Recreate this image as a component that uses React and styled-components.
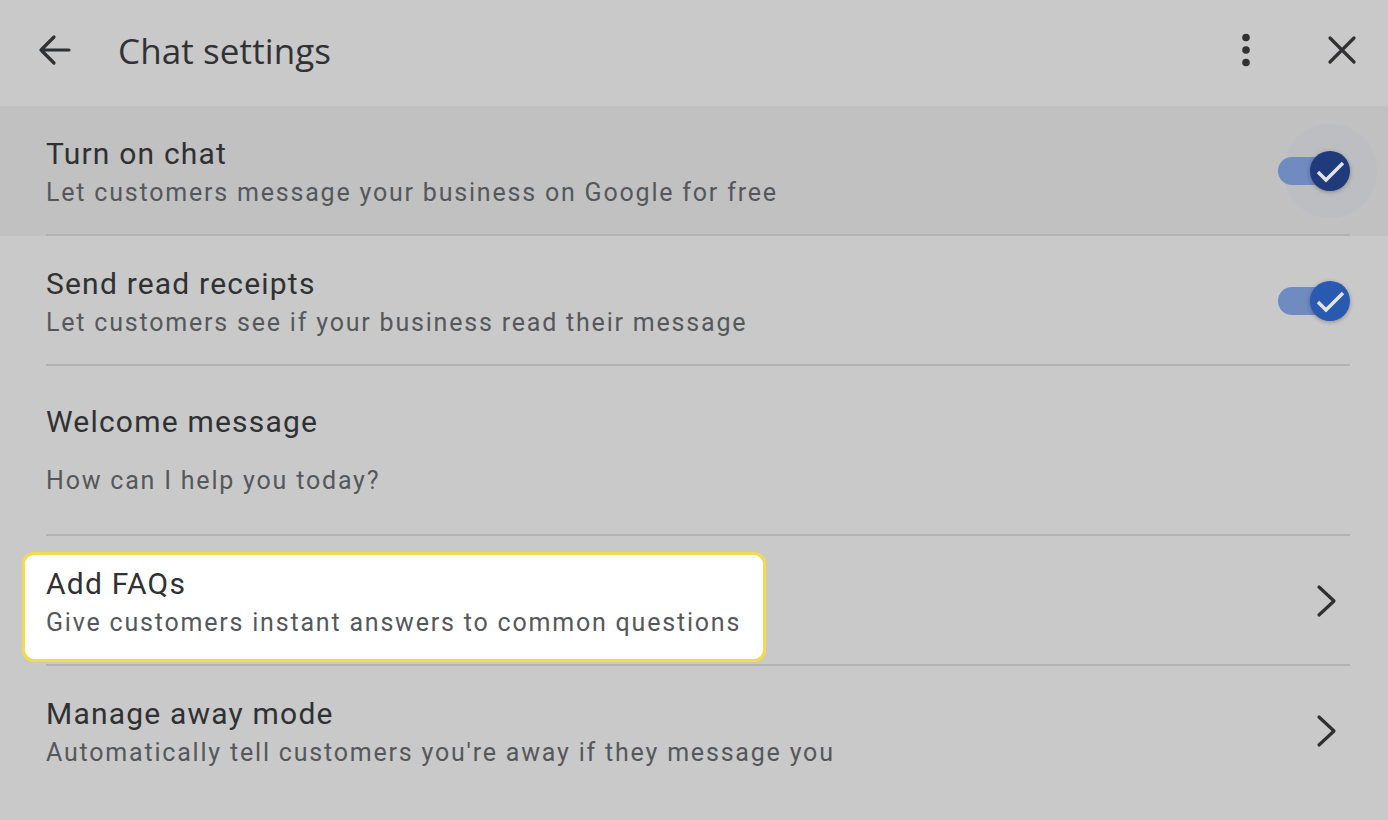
import React from 'react';
import styled, { createGlobalStyle } from 'styled-components';

// ==============================================

const GlobalStyle = createGlobalStyle`
  html, body {
    margin: 0;
    padding: 0;
    background: #c9c9c9;
  }
  body {
    font-family: Roboto, "Liberation Sans", sans-serif;
  }
`;

const Page = styled.div`
  width: 1388px;
  height: 820px;
  background: #c9c9c9;
  overflow: hidden;
`;

const Header = styled.div`
  display: flex;
  align-items: center;
  height: 106px;
  padding: 0 26px 6px 34px;
  box-sizing: border-box;
  color: #2f3133;
`;

const Title = styled.h1`
  margin: 0 0 0 44px;
  flex: 1;
  font-family: "Open Sans", sans-serif;
  font-weight: 400;
  font-size: 35px;
  color: #303235;
  letter-spacing: 0.1px;
`;

const IconButton = styled.div`
  display: grid;
  place-items: center;
  width: ${(p) => p.$size || 40}px;
  height: 40px;
  margin-left: ${(p) => p.$gap || 0}px;
`;

const List = styled.div`
  display: flex;
  flex-direction: column;
`;

const Row = styled.div`
  position: relative;
  display: flex;
  align-items: center;
  height: ${(p) => p.$height || 130}px;
  padding: 0 38px 0 46px;
  box-sizing: border-box;
  background: ${(p) => (p.$active ? '#c1c1c1' : 'transparent')};

  &::after {
    content: '';
    display: ${(p) => (p.$last ? 'none' : 'block')};
    position: absolute;
    left: 46px;
    right: 38px;
    bottom: 0;
    height: 2px;
    background: #b3b3b6;
  }
`;

const Texts = styled.div`
  flex: 1;
  display: flex;
  flex-direction: column;
  gap: ${(p) => p.$gap || 8}px;
  padding-top: ${(p) => p.$pt ?? 4}px;
  position: relative;
  z-index: 1;
`;

const RowTitle = styled.div`
  font-size: 30px;
  line-height: 32px;
  color: #2f3133;
  letter-spacing: 1.2px;
`;

const RowSub = styled.div`
  font-size: 25px;
  line-height: 30px;
  color: #55585b;
  letter-spacing: 1.8px;
`;

const Highlight = styled.div`
  position: absolute;
  left: 22px;
  top: 16px;
  width: 744px;
  height: 110px;
  box-sizing: border-box;
  background: #ffffff;
  border: 3px solid #f6da4e;
  border-radius: 12px;
  z-index: 0;
`;

const SwitchWrap = styled.div`
  position: relative;
  width: 72px;
  height: 40px;
  z-index: 1;
`;

const Halo = styled.div`
  position: absolute;
  left: 5px;
  top: -27px;
  width: 94px;
  height: 94px;
  border-radius: 50%;
  background: #bdbec1;
`;

const Track = styled.div`
  position: absolute;
  left: 0;
  top: 6px;
  width: 50px;
  height: 28px;
  border-radius: 14px;
  background: #6f8bbf;
`;

const Thumb = styled.div`
  position: absolute;
  left: 32px;
  top: 0;
  width: 40px;
  height: 40px;
  border-radius: 50%;
  background: ${(p) => (p.$pressed ? '#1f3b7c' : '#2a5ab0')};
  box-shadow: 0 1px 4px rgba(0, 0, 0, 0.3);

  svg {
    position: absolute;
    left: 0;
    top: 0;
  }
`;

const Chevron = styled.div`
  display: grid;
  place-items: center;
  width: 40px;
  height: 40px;
  margin-right: 4px;
  color: #2d2f31;
`;

// ==============================================

const Check = () => (
  <svg width='40' height='40' viewBox='0 0 40 40'>
    <path d='M8 21l8 8L33 12' fill='none' stroke='#e3e3e6' strokeWidth='3.4' />
  </svg>
);

const Switch = ({ pressed }) => (
  <SwitchWrap>
    {pressed && <Halo />}
    <Track />
    <Thumb $pressed={pressed}>
      <Check />
    </Thumb>
  </SwitchWrap>
);

const ChevronRight = () => (
  <Chevron>
    <svg width='22' height='34' viewBox='0 0 22 34'>
      <path d='M4 3l15 14L4 31' fill='none' stroke='currentColor' strokeWidth='3.2' strokeLinecap='round' strokeLinejoin='round' />
    </svg>
  </Chevron>
);

// ==============================================

export default function App() {
  return (
    <Page>
      <GlobalStyle />
      <Header>
        <IconButton>
          <svg width='34' height='32' viewBox='0 0 34 32'>
            <path d='M32 16H4M17 3L4 16l13 13' fill='none' stroke='#2f3133' strokeWidth='3.2' strokeLinecap='round' strokeLinejoin='round' />
          </svg>
        </IconButton>
        <Title>Chat settings</Title>
        <IconButton $size={24}>
          <svg width='10' height='34' viewBox='0 0 10 34'>
            <circle cx='5' cy='4.5' r='3.8' fill='#2f3133' />
            <circle cx='5' cy='17' r='3.8' fill='#2f3133' />
            <circle cx='5' cy='29.5' r='3.8' fill='#2f3133' />
          </svg>
        </IconButton>
        <IconButton $gap={64}>
          <svg width='30' height='30' viewBox='0 0 30 30'>
            <path d='M3 3l24 24M27 3L3 27' fill='none' stroke='#2f3133' strokeWidth='3.2' strokeLinecap='round' />
          </svg>
        </IconButton>
      </Header>

      <List>
        <Row $active>
          <Texts>
            <RowTitle>Turn on chat</RowTitle>
            <RowSub>Let customers message your business on Google for free</RowSub>
          </Texts>
          <Switch pressed />
        </Row>

        <Row>
          <Texts>
            <RowTitle>Send read receipts</RowTitle>
            <RowSub>Let customers see if your business read their message</RowSub>
          </Texts>
          <Switch />
        </Row>

        <Row $height={170}>
          <Texts $gap={28} $pt={0}>
            <RowTitle>Welcome message</RowTitle>
            <RowSub>How can I help you today?</RowSub>
          </Texts>
        </Row>

        <Row>
          <Highlight />
          <Texts>
            <RowTitle>Add FAQs</RowTitle>
            <RowSub>Give customers instant answers to common questions</RowSub>
          </Texts>
          <ChevronRight />
        </Row>

        <Row $last>
          <Texts>
            <RowTitle>Manage away mode</RowTitle>
            <RowSub>Automatically tell customers you're away if they message you</RowSub>
          </Texts>
          <ChevronRight />
        </Row>
      </List>
    </Page>
  );
}
